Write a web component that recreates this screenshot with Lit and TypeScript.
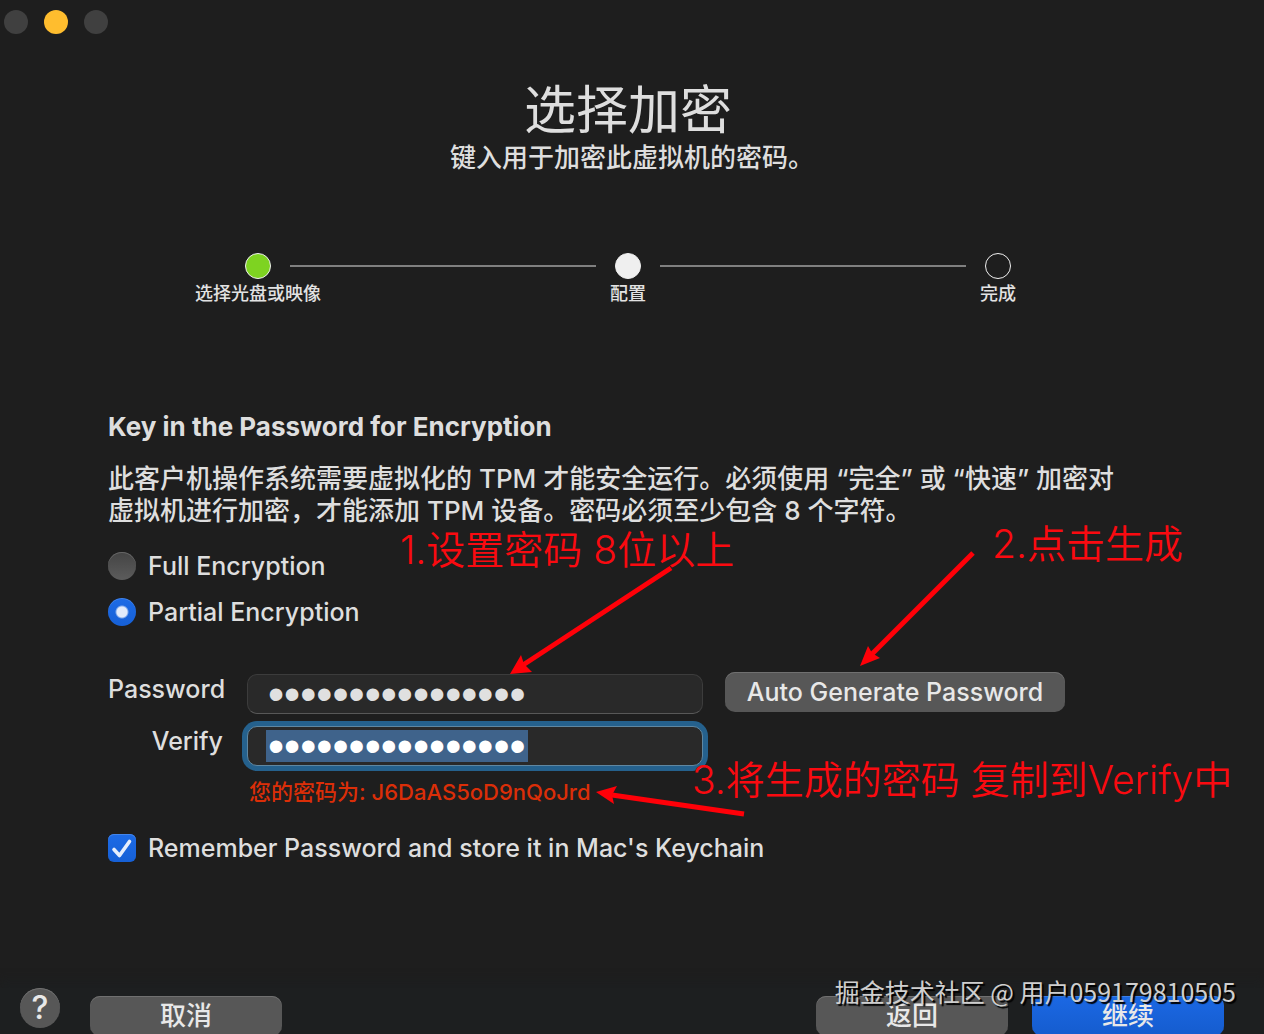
import { LitElement, html, css, svg } from "lit";
import { customElement, state } from "lit/decorators.js";

interface Step {
  label: string;
  status: "done" | "current" | "todo";
}

const STEPS: Step[] = [
  { label: "选择光盘或映像", status: "done" },
  { label: "配置", status: "current" },
  { label: "完成", status: "todo" },
];

@customElement("step-progress")
export class StepProgress extends LitElement {
  static styles = css`
    :host {
      display: block;
    }
    .steps {
      display: grid;
      grid-template-columns: 64px 1fr 64px 1fr 64px;
      max-width: 804px;
      margin: 0 auto;
      padding: 0;
      list-style: none;
    }
    .step {
      display: flex;
      flex-direction: column;
      align-items: center;
      gap: 3px;
      font-size: 18px;
      font-weight: 500;
      line-height: 24px;
      white-space: nowrap;
      color: #e2e2e2;
    }
    .dot {
      box-sizing: border-box;
      width: 26px;
      height: 26px;
      border: 1px solid #f0f0f0;
      border-radius: 50%;
    }
    .dot.done {
      background: #7ed321;
    }
    .dot.current {
      background: #efefef;
    }
    .line {
      height: 2px;
      margin-top: 12px;
      background: #808080;
    }
  `;

  render() {
    return html`<ol class="steps">
      ${STEPS.map(
        (s, i) => html`${i > 0 ? html`<li class="line" role="presentation"></li>` : null}
          <li class="step"><span class="dot ${s.status}"></span><span>${s.label}</span></li>`
      )}
    </ol>`;
  }
}

@customElement("note-overlay")
export class NoteOverlay extends LitElement {
  static styles = css`
    :host {
      position: absolute;
      inset: 0;
      pointer-events: none;
    }
    .arrows {
      position: absolute;
      left: 0;
      top: 0;
      width: 1264px;
      height: 1034px;
    }
    .note {
      position: absolute;
      font-size: 39px;
      font-weight: 350;
      line-height: 48px;
      white-space: nowrap;
      color: #fa0a10;
    }
    .one {
      left: 400px;
      top: 526px;
    }
    .two {
      left: 992px;
      top: 520px;
    }
    .three {
      left: 692px;
      top: 756px;
    }
    .mark {
      position: absolute;
      right: 28px;
      bottom: 25px;
      font: 25px/36px "Noto Sans CJK SC", sans-serif;
      white-space: nowrap;
      color: #cfcfcf;
      text-shadow: 2px 2px 1px #000;
    }
  `;

  private arrow(x1: number, y1: number, x2: number, y2: number, head: string) {
    return svg`<line x1=${x1} y1=${y1} x2=${x2} y2=${y2} stroke="#ff0008" stroke-width="5" /><polygon points=${head} fill="#ff0008" />`;
  }

  render() {
    return html`
      <svg class="arrows" viewBox="0 0 1264 1034" aria-hidden="true">
        ${this.arrow(671, 568, 523, 665, "510,674 521,655 524,664 532,672")}
        ${this.arrow(973, 553, 871, 655, "860,666 868,646 872,653 880,658")}
        ${this.arrow(744, 814, 612, 795, "596,792 617,786 612,795 614,804")}
      </svg>
      <div class="note one">1.设置密码 8位以上</div>
      <div class="note two">2.点击生成</div>
      <div class="note three">3.将生成的密码 复制到Verify中</div>
      <div class="mark">掘金技术社区 @ 用户059179810505</div>
    `;
  }
}

@customElement("app-root")
export class AppRoot extends LitElement {
  @state() private password = "J6DaAS5oD9nQoJrd";
  @state() private mode = "partial";

  static styles = css`
    :host {
      display: block;
      font-family: Inter, "Noto Sans CJK SC", sans-serif;
      font-size: 25px;
      font-weight: 500;
      line-height: 32px;
      color: #dedede;
    }
    .window {
      position: relative;
      display: flex;
      flex-direction: column;
      box-sizing: border-box;
      height: 100vh;
      overflow: hidden;
      background: #1e1e1e;
    }
    .lights {
      display: flex;
      gap: 16px;
      padding: 10px 4px 0;
    }
    .light {
      width: 24px;
      height: 24px;
      padding: 0;
      border: 0;
      border-radius: 50%;
      background: #404040;
    }
    .light.minimize {
      background: #ffbd2e;
    }
    .heading {
      padding: 45px 0 79px;
      text-align: center;
    }
    .title {
      margin: 0;
      padding-right: 8px;
      font-size: 52px;
      font-weight: 400;
      line-height: 63px;
    }
    .subtitle {
      margin: 0;
      font-size: 26px;
    }
    .progress {
      padding-right: 8px;
    }
    .form {
      padding: 105px 108px 0;
    }
    .form-title {
      margin: 0 0 20px;
      font-size: 26px;
      font-weight: 700;
    }
    .description {
      margin: 0 0 23px;
      font-size: 26px;
    }
    .option {
      display: flex;
      align-items: center;
      gap: 12px;
      width: fit-content;
    }
    .option + .option {
      margin-top: 14px;
    }
    .radio,
    .check {
      appearance: none;
      flex: none;
      width: 28px;
      height: 28px;
      margin: 0;
      border-radius: 50%;
      background: linear-gradient(#444, #5c5c5c);
      box-shadow: inset 0 1px 0 #666;
    }
    .radio:checked {
      background: radial-gradient(circle, #e2ebfb 5px, transparent 7px),
        linear-gradient(#1d6be6, #1660d6);
      box-shadow: inset 0 1px 0 #4385ea;
    }
    .fields {
      display: grid;
      grid-template-columns: 115px minmax(0, 456px) 340px;
      column-gap: 24px;
      row-gap: 12px;
      margin-top: 46px;
    }
    .label {
      line-height: 30px;
      text-align: right;
      white-space: nowrap;
    }
    .field {
      box-sizing: border-box;
      width: 100%;
      height: 40px;
      margin: 0;
      padding: 0 20px;
      border: 1px solid #3c3c3c;
      border-bottom-color: #585858;
      border-radius: 10px;
      outline: none;
      background: #292929;
      font: 46px/38px "Liberation Sans", sans-serif;
      color: #e0e0e0;
    }
    .field.active {
      border-color: #5f87a1;
      background: linear-gradient(#3f638b, #3f638b) 18px 3px / 262px 32px no-repeat #292929;
      box-shadow: 0 0 0 5px #25618d;
      color: #fff;
    }
    .button {
      box-sizing: border-box;
      height: 40px;
      padding: 0;
      border: 0;
      border-radius: 10px;
      background: #575757;
      box-shadow: inset 0 1px 0 #707070;
      font: inherit;
      line-height: 38px;
      color: #e8e8e8;
    }
    .generate {
      margin: -2px 2px 0 -2px;
    }
    .hint {
      grid-column: 2 / -1;
      margin: -2px 0 0 2px;
      font-size: 22px;
      color: #db2e08;
    }
    .remember {
      margin-top: 24px;
    }
    .check {
      border-radius: 6px;
    }
    .check-box {
      display: grid;
      flex: none;
    }
    .check-box > * {
      grid-area: 1 / 1;
    }
    .check:checked {
      background: linear-gradient(#1d6be6, #1660d6);
      box-shadow: inset 0 1px 0 #4385ea;
    }
    .tick {
      pointer-events: none;
    }
    .footer {
      display: flex;
      flex: none;
      align-items: flex-start;
      height: 46px;
      margin-top: auto;
      padding: 0 40px 0 20px;
      background: #1d1f20;
      box-shadow: 0 -8px 8px #1d1f20;
    }
    .help {
      width: 40px;
      margin-right: 30px;
      border-radius: 50%;
      font-size: 32px;
      line-height: 40px;
    }
    .action {
      width: 192px;
      margin-top: 8px;
      font-size: 26px;
    }
    .back {
      margin-left: auto;
    }
    .next {
      margin-left: 24px;
      background: linear-gradient(#1b68e4, #155cce);
      box-shadow: inset 0 1px 0 #3b7fe9;
    }
  `;

  private radio(value: string, text: string) {
    return html`<label class="option">
      <input
        class="radio"
        type="radio"
        name="mode"
        .checked=${this.mode === value}
        @change=${() => (this.mode = value)}
      />${text}</label>`;
  }

  render() {
    return html`
      <main class="window">
        <div class="lights">
          <button class="light" aria-label="Close"></button>
          <button class="light minimize" aria-label="Minimize"></button>
          <button class="light" aria-label="Zoom"></button>
        </div>
        <header class="heading">
          <h1 class="title">选择加密</h1>
          <p class="subtitle">键入用于加密此虚拟机的密码。</p>
        </header>
        <step-progress class="progress"></step-progress>
        <form class="form" @submit=${(e: Event) => e.preventDefault()}>
          <h2 class="form-title">Key in the Password for Encryption</h2>
          <p class="description">
            此客户机操作系统需要虚拟化的 TPM 才能安全运行。必须使用 “完全” 或 “快速” 加密对<br />虚拟机进行加密，才能添加 TPM 设备。密码必须至少包含 8 个字符。
          </p>
          ${this.radio("full", "Full Encryption")} ${this.radio("partial", "Partial Encryption")}
          <div class="fields">
            <label class="label" for="password">Password</label>
            <input class="field" id="password" type="password" .value=${this.password} />
            <button class="button generate" type="button">Auto Generate Password</button>
            <label class="label" for="verify">Verify</label>
            <input class="field active" id="verify" type="password" .value=${this.password} />
            <span></span>
            <span></span>
            <p class="hint">您的密码为: ${this.password}</p>
          </div>
          <label class="option remember">
            <span class="check-box">
              <input class="check" type="checkbox" checked />
              <svg class="tick" width="28" height="28" viewBox="0 0 28 28" aria-hidden="true">
                <path
                  d="M6 15.500L11.500 21.500L21.500 7.500"
                  fill="none"
                  stroke="#e6eefc"
                  stroke-width="3.600"
                  stroke-linecap="round"
                  stroke-linejoin="round"
                />
              </svg>
            </span>
            Remember Password and store it in Mac's Keychain
          </label>
        </form>
        <footer class="footer">
          <button class="button help" aria-label="Help">?</button>
          <button class="button action">取消</button>
          <button class="button action back">返回</button>
          <button class="button action next">继续</button>
        </footer>
        <note-overlay></note-overlay>
      </main>
    `;
  }
}
